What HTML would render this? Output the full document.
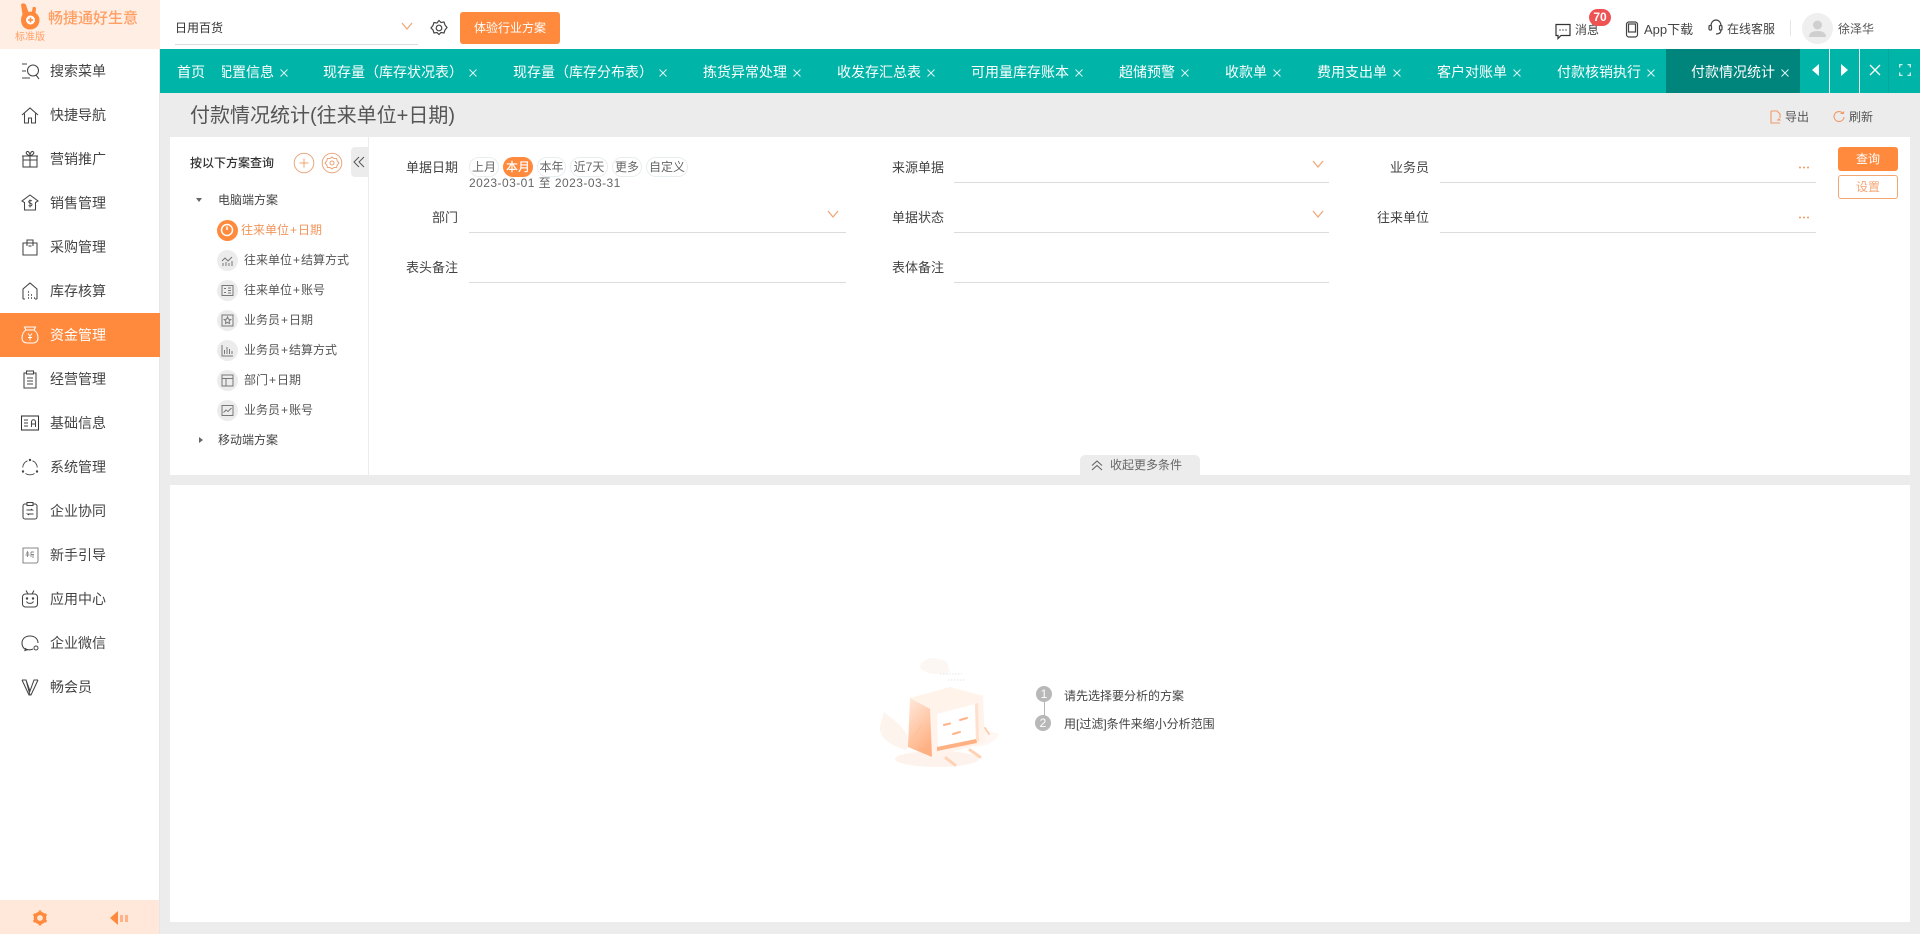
<!DOCTYPE html>
<html lang="zh-CN">
<head>
<meta charset="utf-8">
<title>付款情况统计</title>
<style>
html,body{margin:0;padding:0;width:1920px;height:934px;overflow:hidden;background:#ececec}
body{position:relative;font-family:"Liberation Sans","Noto Sans CJK SC",sans-serif;font-size:12px;color:#444}
div,span,svg{box-sizing:border-box}
.a{position:absolute}
.t{position:absolute;white-space:nowrap;line-height:20px;height:20px}
.side{font-size:14px;left:50px;color:#444}
.ic{position:absolute;left:20px;width:20px;height:20px;fill:none;stroke:#444;stroke-width:1.050}
.tab{position:absolute;top:61.5px;font-size:14px;color:#fff;white-space:nowrap;line-height:20px;height:20px}
.x{position:absolute;top:68.5px;width:8px;height:8px;stroke:#dff5f3;stroke-width:1;fill:none}
.pill{position:absolute;top:157px;height:20px;border:1px solid #e8eef0;border-radius:10px;line-height:18px;text-align:center;color:#666;background:#fff}
.lab{position:absolute;white-space:nowrap;line-height:20px;height:20px;text-align:right;color:#444;width:70px;font-size:13px}
.u{position:absolute;height:1px;background:#dcdcdc}
.chev{position:absolute;width:14px;height:9px;fill:none;stroke:#f0a878;stroke-width:1.3}
.dots{position:absolute;width:12px;height:3px}
.tree{font-size:12px;color:#555}
.p{padding:0 1px}
.cir{position:absolute;left:216.5px;width:21px;height:21px;border-radius:50%;background:#ececec}
.cir svg{position:absolute;left:4px;top:4px;width:13px;height:13px;fill:none;stroke:#777;stroke-width:1}
</style>
</head>
<body>

<!-- top bar -->
<div class="a" style="left:160px;top:0;width:1760px;height:49px;background:#fff"></div>

<!-- sidebar -->
<div class="a" style="left:0;top:0;width:160px;height:934px;background:#fff;border-right:1px solid #e6e6e6"></div>
<div class="a" style="left:0;top:0;width:160px;height:49px;background:#ffeee4"></div>
<svg class="a" style="left:18px;top:2px;width:24px;height:30px" viewBox="0 0 24 30">
  <path d="M3 2.500C4 1 7 1 8 3l2.500 7c1.500-.5 2.800-.5 3.500-.3l.5-3.700c.3-1.500 3.500-1.500 3.500.5l-.5 4.500c2.500 1.500 4 4 4 7 0 5.500-4 9.500-9.500 9.500S3 23.500 3 18c0-2 .6-4 1.500-5.500z" fill="#ff8a3d"/>
  <circle cx="12.500" cy="18" r="4.500" fill="#fff"/>
  <path d="M12.500 15.500v5M10 18h5" stroke="#ff8a3d" stroke-width="1.600"/>
</svg>
<div class="t" style="left:48px;top:9px;font-size:15px;color:#ff9f63;font-weight:500">畅捷通好生意</div>
<div class="t" style="left:15px;top:28px;font-size:10px;color:#ff9f63">标准版</div>

<div class="a" style="left:0;top:313px;width:160px;height:44px;background:#ff8a3d"></div>

<svg class="ic" style="top:61px" viewBox="0 0 20 20"><path d="M2 3h5M2 10h4M2 17h8"/><circle cx="13" cy="9.500" r="5.500"/><path d="M16 14l3 4"/></svg>
<div class="t side" style="top:60.5px">搜索菜单</div>
<svg class="ic" style="top:105px" viewBox="0 0 20 20"><path d="M2 10l8-7 8 7M4.500 8.500V18h4v-5h3v5h4V8.500"/></svg>
<div class="t side" style="top:104.500px">快捷导航</div>
<svg class="ic" style="top:149px" viewBox="0 0 20 20"><rect x="3" y="7" width="14" height="11"/><path d="M2 7h16M10 7v11M3 11h14M10 7C7 6 5 4 7 2.500 9 2 10 5 10 7c0-2 1-5 3-4.500C15 4 13 6 10 7z"/></svg>
<div class="t side" style="top:148.500px">营销推广</div>
<svg class="ic" style="top:193px" viewBox="0 0 20 20"><path d="M10 2l8 6-2.500 1.500V17h-11V9.500L2 8z"/><path d="M12 8c-2-1.500-4 0-3 1.500s3 .5 3 2-2 2-3.500 1M10 6.500v8" stroke-width=".9"/></svg>
<div class="t side" style="top:192.500px">销售管理</div>
<svg class="ic" style="top:237px" viewBox="0 0 20 20"><path d="M3 6h14v12H3zM7 9V3h6v6"/><path d="M8.500 9h3"/></svg>
<div class="t side" style="top:236.500px">采购管理</div>
<svg class="ic" style="top:281px" viewBox="0 0 20 20"><path d="M3 18V8l7-6 7 6v10M3 18h2M15 18h2"/><path d="M8 11h1M8 14h1M8 17h1M11 14h1M11 17h1M14 17h1" stroke-width="1.400"/></svg>
<div class="t side" style="top:280.500px">库存核算</div>
<svg class="ic" style="top:325px;stroke:#fff" viewBox="0 0 20 20"><path d="M6 5L4.500 2h11L14 5M6 5h8M6 5C3 7 2 10 2 13c0 3 2 5 5 5h6c3 0 5-2 5-5 0-3-1-6-4-8z"/><path d="M8 8.500l2 2.500 2-2.500M10 11v4.500M8 12.500h4" stroke-width="1"/></svg>
<div class="t side" style="top:324.500px;color:#fff">资金管理</div>
<svg class="ic" style="top:369px" viewBox="0 0 20 20"><path d="M6 4H4v15h12V4h-2"/><rect x="6.500" y="2" width="7" height="3"/><path d="M7 9h6M7 12h6M7 15h6"/></svg>
<div class="t side" style="top:368.500px">经营管理</div>
<svg class="ic" style="top:413px" viewBox="0 0 20 20"><rect x="1.500" y="3" width="17" height="14" stroke="#333"/><path d="M4 7h4M4 10h4M4 13h4M11.500 14V9c0-3 4-3 4 0v5M11.500 11h4"/></svg>
<div class="t side" style="top:412.500px">基础信息</div>
<svg class="ic" style="top:457px;stroke-width:.9" viewBox="0 0 20 20"><path d="M7.500 3.800C5 4.800 3 7 2.700 10.500M12.500 3.800c2.500 1 4.500 3.200 4.800 6.700M5.500 16.500c2.500 1.800 6.500 1.800 9 0"/><circle cx="10" cy="3" r="1.200" fill="#444" stroke="none"/><circle cx="3" cy="14.500" r="1.200" fill="#444" stroke="none"/><circle cx="17" cy="14.500" r="1.200" fill="#444" stroke="none"/></svg>
<div class="t side" style="top:456.500px">系统管理</div>
<svg class="ic" style="top:501px" viewBox="0 0 20 20"><rect x="3" y="3" width="14" height="15" rx="2"/><rect x="7" y="1.500" width="6" height="3" fill="#fff"/><path d="M6.500 9h6l-1.500-1M13.500 13h-6l1.500 1" stroke-width="1"/></svg>
<div class="t side" style="top:500.500px">企业协同</div>
<svg class="ic" style="top:545px;stroke:#888" viewBox="0 0 20 20"><path d="M3 3h15v13c0 1-1 2-2 2H3z"/><path d="M6 8h3M7.500 6v6M5.500 10h4M11 7h3M11 7v5M11 9.500h3M13 9.500V13" stroke-width=".9"/></svg>
<div class="t side" style="top:544.500px">新手引导</div>
<svg class="ic" style="top:589px" viewBox="0 0 20 20"><rect x="2.500" y="5" width="15" height="13" rx="3"/><path d="M6 1.500L8 5M14 1.500L12 5M6.500 12.500c1.500 2.500 5.500 2.500 7 0"/><circle cx="7" cy="9.500" r=".7" fill="#444"/><circle cx="13" cy="9.500" r=".7" fill="#444"/></svg>
<div class="t side" style="top:588.500px">应用中心</div>
<svg class="ic" style="top:633px" viewBox="0 0 20 20"><path d="M13 16c-2 1-4 1-6 .5-3 0-5-3-5-6.500 0-4 3-7 8-7s8 3 8 7"/><path d="M6 15l-1 2.500 3-1"/><circle cx="16" cy="15" r="2" stroke-width="1"/></svg>
<div class="t side" style="top:632.500px">企业微信</div>
<svg class="ic" style="top:677px" viewBox="0 0 20 20"><path d="M2 3l7 15h2l7-15M2 3h4l4 11 4-11h4M6 3l4 15"/></svg>
<div class="t side" style="top:676.500px">畅会员</div>

<div class="a" style="left:0;top:900px;width:159px;height:34px;background:#ffe8da"></div>
<svg class="a" style="left:32px;top:910px;width:16px;height:16px" viewBox="0 0 16 16"><circle cx="8" cy="8" r="4.600" fill="none" stroke="#ff8a3d" stroke-width="3.400"/><path d="M8 0.500v3M8 12.500v3M1.500 4.200l2.600 1.500M11.900 10.300l2.600 1.500M1.500 11.800l2.600-1.500M11.900 5.700l2.600-1.500" stroke="#ff8a3d" stroke-width="2.600"/></svg>
<svg class="a" style="left:110px;top:910px;width:19px;height:16px" viewBox="0 0 19 16"><path d="M0 8l8-7v14z" fill="#ff8a3d"/><rect x="10" y="5" width="3" height="7" fill="#ffb287"/><rect x="15" y="5" width="3" height="7" fill="#ffb287"/></svg>

<!-- top bar content -->
<div class="t" style="left:175px;top:18px;color:#333">日用百货</div>
<div class="u" style="left:175px;top:44px;width:243px"></div>
<svg class="chev" style="left:400px;top:22px" viewBox="0 0 14 9"><path d="M2 1l5 6 5-6"/></svg>
<svg class="a" style="left:430px;top:19px;width:18px;height:18px;fill:none;stroke:#444;stroke-width:1.200" viewBox="0 0 18 18"><path d="M9 1.500l2 2 3-.5 1 3 2 2.500-2 2.500-1 3-3-.5-2 2-2-2-3 .5-1-3L1 9l2-2.500 1-3 3 .5z"/><circle cx="9" cy="9" r="2.800"/></svg>
<div class="a" style="left:460px;top:12px;width:100px;height:32px;background:#ff8a3d;border-radius:3px;color:#fff;text-align:center;line-height:32px">体验行业方案</div>

<svg class="a" style="left:1554px;top:22px;width:18px;height:18px;fill:none;stroke:#333;stroke-width:1.200" viewBox="0 0 18 18"><path d="M2 2.500h14v11H7l-3 3v-3H2z"/><path d="M5.500 8h1M8.500 8h1M11.500 8h1" stroke-width="1.600"/></svg>
<div class="t" style="left:1575px;top:20px;color:#444">消息</div>
<div class="a" style="left:1589px;top:9px;width:22px;height:17px;background:#ee5253;border-radius:9px;color:#fff;font-weight:bold;font-size:12px;line-height:17px;text-align:center">70</div>
<svg class="a" style="left:1625px;top:21px;width:14px;height:17px;fill:none;stroke:#444;stroke-width:1.200" viewBox="0 0 14 17"><rect x="1.500" y="1" width="11" height="15" rx="2.500"/><rect x="3.500" y="3" width="7" height="8"/></svg>
<div class="t" style="left:1644px;top:20px;color:#444;font-size:13px">App下载</div>
<svg class="a" style="left:1708px;top:19px;width:15px;height:16px;fill:none;stroke:#444;stroke-width:1.200" viewBox="0 0 15 16"><path d="M3 7c0-8 10-8 10 0M8 15c3 0 5-1 5-4"/><rect x="1" y="6.500" width="2.500" height="4.500" rx="1"/><rect x="11.500" y="6.500" width="2.500" height="4.500" rx="1"/></svg>
<div class="t" style="left:1727px;top:18.500px;color:#444">在线客服</div>
<div class="a" style="left:1790px;top:20px;width:1px;height:16px;background:#e6e6e6"></div>
<div class="a" style="left:1802px;top:13px;width:31px;height:31px;border-radius:50%;background:#efefef;overflow:hidden">
  <svg style="position:absolute;left:6px;top:6px;width:19px;height:19px" viewBox="0 0 19 19"><circle cx="9.500" cy="6" r="4.500" fill="#cfcfcf"/><path d="M1 18c0-4 3-6 8.500-6s8.500 2 8.500 6z" fill="#cfcfcf"/></svg>
</div>
<div class="t" style="left:1838px;top:18.500px;color:#555">徐泽华</div>

<!-- tab bar -->
<div class="a" style="left:160px;top:49px;width:1760px;height:44px;background:#00b4a8"></div>
<div class="a" style="left:1666px;top:49px;width:134px;height:44px;background:#00857d"></div>
<div class="tab" style="left:177px">首页</div>
<div class="a" style="left:222px;top:61.500px;width:52px;height:20px;overflow:hidden"><div class="tab" style="left:-4px;top:0">配置信息</div></div>
<svg class="x" style="left:280px" viewBox="0 0 8 8"><path d="M.5.500l7 7M7.500.500l-7 7"/></svg>
<div class="tab" style="left:323px">现存量（库存状况表）</div>
<svg class="x" style="left:469px" viewBox="0 0 8 8"><path d="M.5.500l7 7M7.500.500l-7 7"/></svg>
<div class="tab" style="left:513px">现存量（库存分布表）</div>
<svg class="x" style="left:659px" viewBox="0 0 8 8"><path d="M.5.500l7 7M7.500.500l-7 7"/></svg>
<div class="tab" style="left:703px">拣货异常处理</div>
<svg class="x" style="left:793px" viewBox="0 0 8 8"><path d="M.5.500l7 7M7.500.500l-7 7"/></svg>
<div class="tab" style="left:837px">收发存汇总表</div>
<svg class="x" style="left:927px" viewBox="0 0 8 8"><path d="M.5.500l7 7M7.500.500l-7 7"/></svg>
<div class="tab" style="left:971px">可用量库存账本</div>
<svg class="x" style="left:1075px" viewBox="0 0 8 8"><path d="M.5.500l7 7M7.500.500l-7 7"/></svg>
<div class="tab" style="left:1119px">超储预警</div>
<svg class="x" style="left:1181px" viewBox="0 0 8 8"><path d="M.5.500l7 7M7.500.500l-7 7"/></svg>
<div class="tab" style="left:1225px">收款单</div>
<svg class="x" style="left:1273px" viewBox="0 0 8 8"><path d="M.5.500l7 7M7.500.500l-7 7"/></svg>
<div class="tab" style="left:1317px">费用支出单</div>
<svg class="x" style="left:1393px" viewBox="0 0 8 8"><path d="M.5.500l7 7M7.500.500l-7 7"/></svg>
<div class="tab" style="left:1437px">客户对账单</div>
<svg class="x" style="left:1513px" viewBox="0 0 8 8"><path d="M.5.500l7 7M7.500.500l-7 7"/></svg>
<div class="tab" style="left:1557px">付款核销执行</div>
<svg class="x" style="left:1647px" viewBox="0 0 8 8"><path d="M.5.500l7 7M7.500.500l-7 7"/></svg>
<div class="tab" style="left:1691px">付款情况统计</div>
<svg class="x" style="left:1781px" viewBox="0 0 8 8"><path d="M.5.500l7 7M7.500.500l-7 7"/></svg>

<div class="a" style="left:1829px;top:49px;width:1px;height:44px;background:#e6f7f6"></div>
<div class="a" style="left:1859px;top:49px;width:1px;height:44px;background:#e6f7f6"></div>
<div class="a" style="left:1888px;top:49px;width:1px;height:44px;background:#00a89d"></div>
<svg class="a" style="left:1810px;top:63px;width:10px;height:14px" viewBox="0 0 10 14"><path d="M9 1v12L2 7z" fill="#fff"/></svg>
<svg class="a" style="left:1840px;top:63px;width:10px;height:14px" viewBox="0 0 10 14"><path d="M1 1v12l7-6z" fill="#fff"/></svg>
<svg class="a" style="left:1869px;top:64px;width:12px;height:12px;stroke:#fff;stroke-width:1.300;fill:none" viewBox="0 0 12 12"><path d="M1 1l10 10M11 1L1 11"/></svg>
<svg class="a" style="left:1899px;top:64px;width:12px;height:12px;stroke:#e6f7f6;stroke-width:1.200;fill:none" viewBox="0 0 12 12"><path d="M.7 3.500V.7h2.800M8.500.7h2.800v2.800M11.300 8.500v2.800H8.500M3.500 11.300H.7V8.500"/></svg>

<!-- title row -->
<div class="a" style="left:190px;top:101px;font-size:20px;line-height:30px;color:#555;white-space:nowrap">付款情况统计(往来单位+日期)</div>
<svg class="a" style="left:1769px;top:110px;width:12px;height:14px;fill:none;stroke:#f29a66;stroke-width:1.100" viewBox="0 0 12 14"><path d="M2 1h6l3 3v4M11 13H2V1"/><path d="M8 10l3 0-1.500-1.500"/></svg>
<div class="t" style="left:1785px;top:107px;color:#555">导出</div>
<svg class="a" style="left:1833px;top:111px;width:12px;height:12px;fill:none;stroke:#f29a66;stroke-width:1.100" viewBox="0 0 12 12"><path d="M10 2.500A5 5 0 1 0 11 6"/><path d="M7.500 2.500h3v-2"/></svg>
<div class="t" style="left:1849px;top:107px;color:#555">刷新</div>

<!-- panels -->
<div class="a" style="left:170px;top:137px;width:1740px;height:338px;background:#fff"></div>
<div class="a" style="left:170px;top:485px;width:1740px;height:437px;background:#fff"></div>
<div class="a" style="left:368px;top:137px;width:1px;height:338px;background:#ececec"></div>

<!-- plan tree -->
<div class="t" style="left:190px;top:153px;color:#333;font-weight:500">按以下方案查询</div>
<svg class="a" style="left:293px;top:152px;width:22px;height:22px;fill:none;stroke:#eba47a;stroke-width:1" viewBox="0 0 22 22"><circle cx="11" cy="11" r="9.800"/><path d="M11 6.500v9M6.500 11h9" stroke="#f2a06c"/></svg>
<svg class="a" style="left:321px;top:152px;width:22px;height:22px;fill:none;stroke:#eba47a;stroke-width:1" viewBox="0 0 22 22"><circle cx="11" cy="11" r="9.800"/><path d="M11 5l2 1.500 2.500 0 .8 2.500 1.700 2-1.700 2-.8 2.500-2.500 0-2 1.500-2-1.500-2.500 0-.8-2.500L4 11l1.700-2 .8-2.500 2.500 0z"/><circle cx="11" cy="11" r="2"/></svg>
<div class="a" style="left:351px;top:147px;width:17px;height:30px;background:#ececec;border-radius:4px 0 0 4px"></div>
<svg class="a" style="left:353px;top:156px;width:12px;height:12px;fill:none;stroke:#555;stroke-width:1" viewBox="0 0 12 12"><path d="M6 1L1 6l5 5M11 1L6 6l5 5"/></svg>

<svg class="a" style="left:196px;top:198px;width:6px;height:4px" viewBox="0 0 6 4"><path d="M0 0h6L3 4z" fill="#666"/></svg>
<div class="t tree" style="left:218px;top:190px;color:#444">电脑端方案</div>

<div class="cir" style="top:219.500px;background:#ff8a3d"><svg style="stroke:#fff;stroke-width:1.500;left:3.500px;top:3.500px;width:14px;height:14px" viewBox="0 0 14 14"><circle cx="7" cy="7" r="5.500"/><path d="M7 3.500V7"/></svg></div>
<div class="t tree" style="left:241px;top:220px;color:#f2945a">往来单位<span class="p">+</span>日期</div>

<div class="cir" style="top:249.500px"><svg viewBox="0 0 13 13"><path d="M1 7l3-3 3 3 4-4M2 12V9M5 12V8M8 12V9M11 12V7"/></svg></div>
<div class="t tree" style="left:244px;top:250px">往来单位<span class="p">+</span>结算方式</div>
<div class="cir" style="top:279.500px"><svg viewBox="0 0 13 13"><rect x="1" y="1.500" width="11" height="10"/><path d="M3 4.500h2M3 8.500h2M7 4h3M7 6.500h3M7 9h3"/></svg></div>
<div class="t tree" style="left:244px;top:280px">往来单位<span class="p">+</span>账号</div>
<div class="cir" style="top:309.500px"><svg viewBox="0 0 13 13"><rect x="1" y="1" width="11" height="11"/><path d="M6.500 3l1 2.200 2.300.3-1.700 1.600.4 2.400-2-1.100-2 1.100.4-2.400L3.200 5.500l2.300-.3z"/></svg></div>
<div class="t tree" style="left:244px;top:310px">业务员<span class="p">+</span>日期</div>
<div class="cir" style="top:339.500px"><svg viewBox="0 0 13 13"><path d="M1 1v11h11M3.500 10V6M6 10V3M8.500 10V5M11 10V7"/></svg></div>
<div class="t tree" style="left:244px;top:340px">业务员<span class="p">+</span>结算方式</div>
<div class="cir" style="top:369.500px"><svg viewBox="0 0 13 13"><rect x="1" y="1" width="11" height="11"/><path d="M1 4.500h11M5 4.500V12"/></svg></div>
<div class="t tree" style="left:244px;top:370px">部门<span class="p">+</span>日期</div>
<div class="cir" style="top:399.500px"><svg viewBox="0 0 13 13"><rect x="1" y="1.500" width="11" height="10"/><path d="M2.500 8.500l2.500-2.500 2 1.500 3.500-3.500"/></svg></div>
<div class="t tree" style="left:244px;top:400px">业务员<span class="p">+</span>账号</div>

<svg class="a" style="left:199px;top:437px;width:4px;height:6px" viewBox="0 0 4 6"><path d="M0 0l4 3-4 3z" fill="#666"/></svg>
<div class="t tree" style="left:218px;top:430px;color:#444">移动端方案</div>

<!-- form -->
<div class="lab" style="left:388px;top:158px">单据日期</div>
<div class="pill" style="left:469px;width:30px">上月</div>
<div class="pill" style="left:503px;width:30px;background:#ff8a3d;border-color:#ff8a3d;color:#fff;font-weight:500">本月</div>
<div class="pill" style="left:537px;width:29px">本年</div>
<div class="pill" style="left:570px;width:38px">近7天</div>
<div class="pill" style="left:612px;width:30px">更多</div>
<div class="pill" style="left:646px;width:42px">自定义</div>
<div class="t" style="left:469px;top:173px;color:#666;letter-spacing:.45px">2023-03-01 至 2023-03-31</div>

<div class="lab" style="left:388px;top:208px">部门</div>
<div class="u" style="left:469px;top:232px;width:377px"></div>
<svg class="chev" style="left:826px;top:210px" viewBox="0 0 14 9"><path d="M2 1l5 6 5-6"/></svg>
<div class="lab" style="left:388px;top:258px">表头备注</div>
<div class="u" style="left:469px;top:282px;width:377px"></div>

<div class="lab" style="left:874px;top:158px">来源单据</div>
<div class="u" style="left:954px;top:182px;width:375px"></div>
<svg class="chev" style="left:1311px;top:160px" viewBox="0 0 14 9"><path d="M2 1l5 6 5-6"/></svg>
<div class="lab" style="left:874px;top:208px">单据状态</div>
<div class="u" style="left:954px;top:232px;width:375px"></div>
<svg class="chev" style="left:1311px;top:210px" viewBox="0 0 14 9"><path d="M2 1l5 6 5-6"/></svg>
<div class="lab" style="left:874px;top:258px">表体备注</div>
<div class="u" style="left:954px;top:282px;width:375px"></div>

<div class="lab" style="left:1359px;top:158px">业务员</div>
<div class="u" style="left:1440px;top:182px;width:376px"></div>
<svg class="dots" style="left:1798px;top:165.500px" viewBox="0 0 12 3"><circle cx="2" cy="1.500" r="1" fill="#f09a60"/><circle cx="6" cy="1.500" r="1" fill="#f09a60"/><circle cx="10" cy="1.500" r="1" fill="#f09a60"/></svg>
<div class="lab" style="left:1359px;top:208px">往来单位</div>
<div class="u" style="left:1440px;top:232px;width:376px"></div>
<svg class="dots" style="left:1798px;top:215.500px" viewBox="0 0 12 3"><circle cx="2" cy="1.500" r="1" fill="#f09a60"/><circle cx="6" cy="1.500" r="1" fill="#f09a60"/><circle cx="10" cy="1.500" r="1" fill="#f09a60"/></svg>

<div class="a" style="left:1838px;top:147px;width:60px;height:24px;background:#ff8a3d;border-radius:3px;color:#fff;text-align:center;line-height:24px">查询</div>
<div class="a" style="left:1838px;top:175px;width:60px;height:24px;background:#fff;border:1px solid #f4a574;border-radius:3px;color:#f4a574;text-align:center;line-height:22px">设置</div>

<!-- collapse -->
<div class="a" style="left:1080px;top:455px;width:120px;height:20px;background:#ececec;border-radius:5px 5px 0 0"></div>
<svg class="a" style="left:1091px;top:460px;width:12px;height:11px;fill:none;stroke:#666;stroke-width:1.100" viewBox="0 0 12 11"><path d="M1 5.500l5-4.500 5 4.500M1 10l5-4.500 5 4.500"/></svg>
<div class="t" style="left:1110px;top:455px;color:#666">收起更多条件</div>

<!-- empty illustration -->
<svg class="a" style="left:870px;top:650px;width:170px;height:125px" viewBox="30 10 170 125">
  <defs>
    <linearGradient id="g1" x1="0" y1="0" x2="0.400" y2="1"><stop offset="0" stop-color="#ffeadd"/><stop offset="1" stop-color="#ffb083"/></linearGradient>
  </defs>
  <path d="M80 26c4-8 14-10 20-6 6-1 9 4 8 8 4 3 0 7-6 6-8 1-22-2-22-8z" fill="#fdf7f3"/>
  <path d="M100 34h22M108 40h18" stroke="#e6e6e6" stroke-width="1" stroke-dasharray="1.500 1.500" fill="none"/>
  <ellipse cx="97" cy="119" rx="42" ry="8" fill="#fef3ec"/>
  <path d="M44 72c6 6 20 12 26 30l-4 8C55 108 38 98 40 86z" fill="#fef4ee"/>
  <path d="M135 90c8-2 16 2 24 4-4 8-14 14-26 12z" fill="#fef7f3"/>
  <path d="M70 58l40-11 33 9-51 14z" fill="#fff3ea"/>
  <path d="M70 58l22 12v47l-24-10z" fill="url(#g1)"/>
  <path d="M90 69l53-14 2 48-53 14z" fill="#fff3ec"/>
  <path d="M97 74l38-10 1 37-38 8z" fill="#fff"/>
  <path d="M135 64l3-1 1 38-3 1z" fill="#ffe0cd"/>
  <path d="M97 107l39-8 1 4-40 8z" fill="#ffb183"/>
  <path d="M104 85l6-1.500M120 80l7-2M113 94l7-2" stroke="#ffb388" stroke-width="2" stroke-linecap="round" fill="none"/>
  <path d="M69 106l12-20" stroke="#ffc39c" stroke-width="2.400" stroke-linecap="round" fill="none"/>
  <path d="M145 88l4 6" stroke="#ffcfb0" stroke-width="2" stroke-linecap="round" fill="none"/>
  <path d="M106 118l9 7M130 110l10 7" stroke="#ffd2b5" stroke-width="3" stroke-linecap="round" fill="none"/>
</svg>

<div class="a" style="left:1043.500px;top:700px;width:1px;height:20px;background:#b8b8b8"></div>
<div class="a" style="left:1036px;top:686px;width:16px;height:16px;border-radius:50%;background:#b8b8b8;color:#fff;text-align:center;line-height:16px;font-size:12px">1</div>
<div class="a" style="left:1035px;top:715px;width:16px;height:16px;border-radius:50%;background:#b8b8b8;color:#fff;text-align:center;line-height:16px;font-size:12px">2</div>
<div class="t" style="left:1064px;top:686px;color:#444">请先选择要分析的方案</div>
<div class="t" style="left:1064px;top:714px;color:#444">用[过滤]条件来缩小分析范围</div>

</body>
</html>
